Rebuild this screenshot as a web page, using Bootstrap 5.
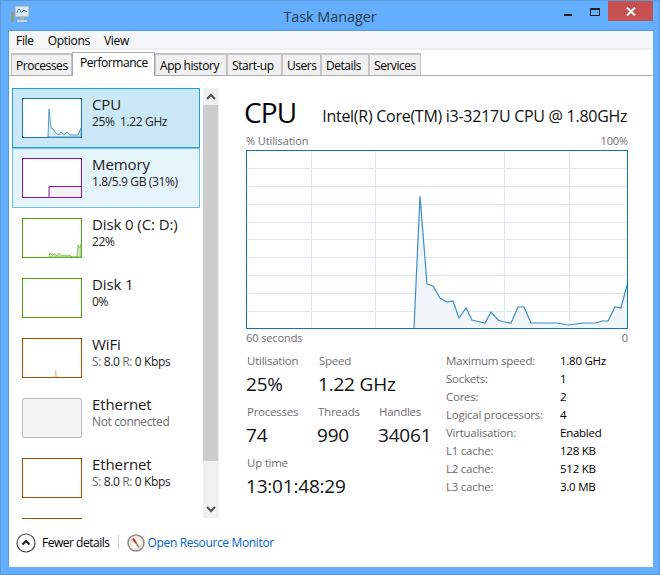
<!DOCTYPE html>
<html lang="en"><head><meta charset="utf-8"><title>Task Manager</title>
<link href="https://cdn.jsdelivr.net/npm/bootstrap@5.3.0/dist/css/bootstrap.min.css" rel="stylesheet">
<style>
html,body{margin:0;height:575px;overflow:hidden;background:#63aefe}
body{font-family:"Open Sans","Noto Sans",sans-serif;font-size:12px;letter-spacing:-.25px;color:#000}
.win{width:660px;height:575px;border:1px solid #5a9ad8;padding:0 7px 7px 7px;background:#63aefe}
.tbar{height:29px;position:relative}
.ttl{font-size:14.5px;line-height:29px;color:#2a3a4a;text-align:center;letter-spacing:-.1px;flex:1;padding-top:1px}
.appico{position:absolute;left:2px;top:3px}
.wbtns{position:absolute;right:-1px;top:0;height:21px}
.wb{width:26px;height:21px}
.wbx{width:45px;height:20px;background:#c75050}
.client{height:537px;background:#fff;border:1px solid #5a9ad8;border-bottom:0;border-right:0;width:645px}
.mbar{height:19px;background:#f5f6f7;border-bottom:2px solid #eeeff0;padding:2px 0 0 7px;gap:14px;line-height:16px}
.mi{color:#000;font-size:12px;letter-spacing:-.3px}
.tabs.nav-tabs{height:26px;padding:3px 0 0 2px;border-bottom:1px solid #acacac;--bs-nav-tabs-border-width:0;flex-wrap:nowrap;align-items:flex-end}
.tabs .nav-link{height:22px;padding:3px 4px 0;margin:0;font-size:12px;line-height:16px;letter-spacing:-.45px;color:#000;background:#f0f0f0;border:2px solid #c4c4c4;border-bottom:0;border-radius:0;border-left-width:1px;white-space:nowrap;border-right-width:1px}
.tabs .nav-link.active{margin-bottom:-1px;background:#fff;border:1px solid #acacac;border-bottom:0;padding:2px 5px 0 7px;color:#000;height:24px}
.t1{width:61px}.t2{width:83px}.t3{width:72px}.t4{width:55px}.t5{width:39px}.t6{width:48px}.t7{width:52px}
.body{height:441px;padding:12px 0 0 3px}
.side{width:188px;height:431px;overflow:hidden;flex:none}
.it{height:60px;padding:9px 0 0 9px;border:1px solid transparent;gap:10px}
.it.sel{background:#cbe8f6;border-color:#26a0da}
.it.hov{background:#e5f3fb;border-color:#70c0e7}
.th{display:block;flex:none;width:60px;height:40px}
.nm{font-size:15px;line-height:18px;color:#1a1a1a;margin-top:-3px;white-space:nowrap;letter-spacing:-.1px}
.sb{font-size:12px;line-height:16px;margin-top:1px;color:#222;white-space:nowrap;letter-spacing:-.37px}
.gr{color:#6d6d6d}
.sbar{width:16px;height:430px;margin-left:3px;background:#f0f0f0;flex:none}
.sbb{height:17px}
.sbt{height:356px;background:#cdcdcd;margin-right:1px}
.main{width:429px;padding-left:27px;flex:none}
.h1t{font-size:28px;line-height:36px;font-weight:400;margin:6px 0 0 -2px;letter-spacing:-.9px;color:#000}
.h2t{font-size:16px;line-height:20px;letter-spacing:-.27px;color:#111;margin:6px 0 0 26px;padding-top:12px;white-space:nowrap}
.cap{font-size:11px;line-height:14px;color:#707070;letter-spacing:-.1px;width:382px;margin-top:4px}
.gph{display:block;width:382px;height:179px;margin-top:2px}
.capb{margin-top:2px}
.stats{margin-top:8px}
.st{width:200px;flex:none;padding-left:1px}
.lab{font-size:11.5px;line-height:15px;color:#707070;white-space:nowrap}
.vl{font-size:19px;line-height:24px;color:#111;white-space:nowrap;letter-spacing:-.2px;margin:4px 0 0 -1px}
.rw1{margin-top:8px}
.rw2{margin-top:8px}
.c1{width:72px}.c2{width:71px}.c3{width:61px}
.cgrid{display:grid;grid-template-columns:114px 68px;grid-auto-rows:18px;font-size:11.5px;line-height:18px;white-space:nowrap;margin-top:-1px;align-self:flex-start}
.foot{height:51px;padding:1px 0 0 7px;font-size:12px}
.fsep{width:1px;height:15px;background:#d0d0d0;margin:0 8px 0 8px}
.fd{letter-spacing:-.48px}
.fic{margin-right:6px}
.cmp{margin-right:3px}
.lnk{color:#0066cc;text-decoration:none;letter-spacing:-.35px}
</style></head>
<body>
<div class="win d-flex flex-column">
  <div class="tbar d-flex">
    <svg class="appico" width="20" height="20" viewBox="0 0 20 20"><rect x="1" y="8" width="3" height="10" fill="#8c9a8c"/><rect x="1.5" y="12" width="2" height="2" fill="#4fc04f"/><rect x="5" y="2" width="14" height="11" fill="#dce6ee" stroke="#97a3ad"/><path d="M6.5 9 9 5l2.5 3.5L14 6l3 2" fill="none" stroke="#2e86c8"/><rect x="10" y="13" width="4" height="3" fill="#a8b2ba"/><rect x="7" y="16" width="10" height="2" fill="#c8d0d6"/></svg>
    <div class="ttl">Task Manager</div>
    <div class="wbtns d-flex">
      <div class="wb"><svg width="26" height="21"><rect x="8" y="13" width="8" height="2" fill="#222"/></svg></div>
      <div class="wb"><svg width="26" height="21"><rect x="8.500" y="7.500" width="9" height="7" fill="none" stroke="#222"/><rect x="8" y="7" width="10" height="2" fill="#222"/></svg></div>
      <div class="wbx d-flex justify-content-center align-items-center"><svg width="10" height="9" viewBox="0 0 10 9"><path d="M1 .5 9 8.500M9 .5 1 8.500" stroke="#fff" stroke-width="2"/></svg></div>
    </div>
  </div>
  <div class="client d-flex flex-column">
    <div class="mbar d-flex"><span class="mi">File</span><span class="mi">Options</span><span class="mi">View</span></div>
    <ul class="nav nav-tabs tabs">
      <li class="nav-item"><a class="nav-link t1" href="#">Processes</a></li>
      <li class="nav-item"><a class="nav-link active t2" href="#">Performance</a></li>
      <li class="nav-item"><a class="nav-link t3" href="#">App history</a></li>
      <li class="nav-item"><a class="nav-link t4" href="#">Start-up</a></li>
      <li class="nav-item"><a class="nav-link t5" href="#">Users</a></li>
      <li class="nav-item"><a class="nav-link t6" href="#">Details</a></li>
      <li class="nav-item"><a class="nav-link t7" href="#">Services</a></li>
    </ul>
    <div class="body d-flex">
      <div class="side">
        <div class="it sel d-flex">
          <svg class="th" viewBox="0 0 60 40"><rect x=".5" y=".5" width="59" height="39" fill="#fff" stroke="#1a75ad"/><path d="M26 39 27 11 29 30 31 31 34 35 37 37 39 34 42 37 45 34 48 37 52 37 56 37 59 30V39Z" fill="#e6f0f7" stroke="#4c9ccd"/></svg>
          <div><div class="nm">CPU</div><div class="sb">25%&nbsp; 1.22 GHz</div></div>
        </div>
        <div class="it hov d-flex">
          <svg class="th" viewBox="0 0 60 40"><rect x=".5" y=".5" width="59" height="39" fill="#fff" stroke="#8b12ae"/><path d="M27 39V28H59V39Z" fill="#f4f2f4"/><path d="M27 39V28.500H59" fill="none" stroke="#8b12ae"/></svg>
          <div><div class="nm">Memory</div><div class="sb">1.8/5.9 GB (31%)</div></div>
        </div>
        <div class="it d-flex">
          <svg class="th" viewBox="0 0 60 40"><rect x=".5" y=".5" width="59" height="39" fill="#fff" stroke="#4da60c"/><path d="M27 39 28 35 30 37 33 36 35 38 37 35 39 38 43 37 45 38 48 37 50 39 55 39 56 27 58 30 59 26V39Z" fill="#d5e8c4" stroke="#77b84a" stroke-width=".8"/></svg>
          <div><div class="nm">Disk 0 (C: D:)</div><div class="sb">22%</div></div>
        </div>
        <div class="it d-flex">
          <svg class="th" viewBox="0 0 60 40"><rect x=".5" y=".5" width="59" height="39" fill="#fff" stroke="#4da60c"/></svg>
          <div><div class="nm">Disk 1</div><div class="sb">0%</div></div>
        </div>
        <div class="it d-flex">
          <svg class="th" viewBox="0 0 60 40"><rect x=".5" y=".5" width="59" height="39" fill="#fff" stroke="#a74f01"/><path d="M33 39 33.800 32 34.600 39Z" fill="#f6d8c4" stroke="#e0a684" stroke-width=".6"/></svg>
          <div><div class="nm">WiFi</div><div class="sb"><span class="gr">S:</span> 8.0 <span class="gr">R:</span> 0 Kbps</div></div>
        </div>
        <div class="it d-flex">
          <svg class="th" viewBox="0 0 60 40"><rect x=".5" y=".5" width="59" height="39" rx="1.500" fill="#f5f5f5" stroke="#bcbcbc"/></svg>
          <div><div class="nm">Ethernet</div><div class="sb gr">Not connected</div></div>
        </div>
        <div class="it d-flex">
          <svg class="th" viewBox="0 0 60 40"><rect x=".5" y=".5" width="59" height="39" fill="#fff" stroke="#a74f01"/></svg>
          <div><div class="nm">Ethernet</div><div class="sb"><span class="gr">S:</span> 8.0 <span class="gr">R:</span> 0 Kbps</div></div>
        </div>
        <div class="it d-flex">
          <svg class="th" viewBox="0 0 60 40"><rect x=".5" y=".5" width="59" height="39" fill="#fff" stroke="#a74f01"/></svg>
        </div>
      </div>
      <div class="sbar d-flex flex-column">
        <svg class="sbb" viewBox="0 0 16 17"><path d="M4 11 8 7l4 4" fill="none" stroke="#505050" stroke-width="2"/></svg>
        <div class="sbt"></div>
        <div class="flex-grow-1"></div>
        <svg class="sbb" viewBox="0 0 16 17"><path d="M4 6 8 10l4-4" fill="none" stroke="#505050" stroke-width="2"/></svg>
      </div>
      <div class="main">
        <div class="d-flex"><div class="h1t">CPU</div><div class="h2t">Intel(R) Core(TM) i3-3217U CPU @ 1.80GHz</div></div>
        <div class="cap d-flex justify-content-between"><span>% Utilisation</span><span>100%</span></div>
        <svg class="gph" viewBox="246 150 382 179">
          <rect x="246.500" y="150.500" width="381" height="178" fill="#fff"/>
          <path d="M247 168.500H627M247 186.500H627M247 204.500H627M247 222.500H627M247 239.500H627M247 257.500H627M247 275.500H627M247 293.500H627M247 311.500H627M311.500 151V328M375.500 151V328M504.500 151V328M569.500 151V328" fill="none" stroke="#dbe8f2"/>
          <path d="M414 328 420 196 427 284 433 286 440 298 447 302 453 301 459 318 466 308 472 320 485 323 491 312 498 320 504 322 511 323 518 307 524 307 531 323 557 323 569 325 583 323 596 323 602 321 608 321 615 307 621 308 627 285V328Z" fill="#f0f5fa"/>
          <path d="M414 328 420 196 427 284 433 286 440 298 447 302 453 301 459 318 466 308 472 320 485 323 491 312 498 320 504 322 511 323 518 307 524 307 531 323 557 323 569 325 583 323 596 323 602 321 608 321 615 307 621 308 627 285" fill="none" stroke="#3d8fc4" stroke-width="1.200"/>
          <rect x="246.500" y="150.500" width="381" height="178" fill="none" stroke="#1176ae"/>
        </svg>
        <div class="cap capb d-flex justify-content-between"><span>60 seconds</span><span>0</span></div>
        <div class="stats d-flex">
          <div class="st">
            <div class="d-flex"><div class="c1"><div class="lab">Utilisation</div><div class="vl">25%</div></div><div><div class="lab">Speed</div><div class="vl">1.22 GHz</div></div></div>
            <div class="rw1 d-flex"><div class="c2"><div class="lab">Processes</div><div class="vl">74</div></div><div class="c3"><div class="lab">Threads</div><div class="vl">990</div></div><div><div class="lab">Handles</div><div class="vl">34061</div></div></div>
            <div class="rw2"><div class="lab">Up time</div><div class="vl">13:01:48:29</div></div>
          </div>
          <div class="cgrid">
            <span class="gr">Maximum speed:</span><span>1.80 GHz</span>
            <span class="gr">Sockets:</span><span>1</span>
            <span class="gr">Cores:</span><span>2</span>
            <span class="gr">Logical processors:</span><span>4</span>
            <span class="gr">Virtualisation:</span><span>Enabled</span>
            <span class="gr">L1 cache:</span><span>128 KB</span>
            <span class="gr">L2 cache:</span><span>512 KB</span>
            <span class="gr">L3 cache:</span><span>3.0 MB</span>
          </div>
        </div>
      </div>
    </div>
    <div class="foot d-flex align-items-center">
      <svg width="20" height="20" viewBox="0 0 20 20" class="fic"><circle cx="10" cy="10" r="9" fill="#fff" stroke="#444" stroke-width="1.200"/><path d="M6.500 11.500 10 8l3.500 3.500" fill="none" stroke="#222" stroke-width="2"/></svg>
      <span class="fd">Fewer details</span>
      <span class="fsep"></span>
      <svg width="18" height="18" viewBox="0 0 18 18" class="cmp"><circle cx="9" cy="9" r="8" fill="#ece8df" stroke="#8f8f86" stroke-width="1.500"/><circle cx="9" cy="9" r="5.500" fill="#f8f6f0"/><path d="M6 4.500 9 9" stroke="#c8242c" stroke-width="2"/><path d="M9 9 12 13.500" stroke="#888" stroke-width="1.500"/></svg>
      <a class="lnk" href="#">Open Resource Monitor</a>
    </div>
  </div>
</div>
<script src="https://cdn.jsdelivr.net/npm/bootstrap@5.3.0/dist/js/bootstrap.bundle.min.js"></script>
</body></html>
